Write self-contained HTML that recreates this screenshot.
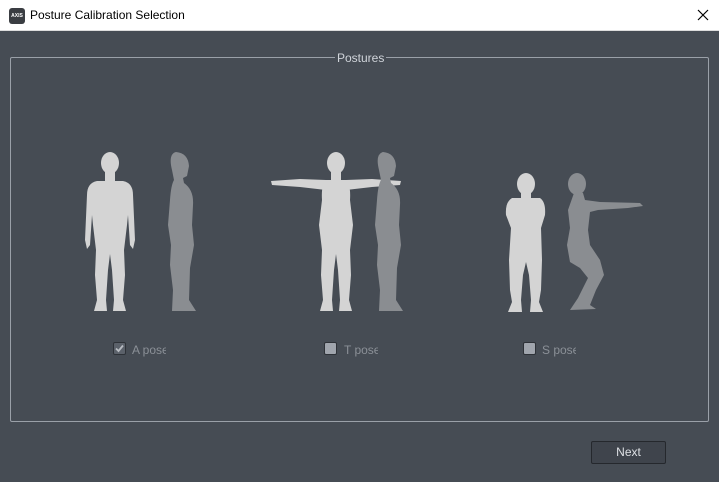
<!DOCTYPE html>
<html><head><meta charset="utf-8"><style>
*{margin:0;padding:0;box-sizing:border-box}
body{width:719px;height:482px;background:#464c54;font-family:"Liberation Sans",sans-serif;position:relative;overflow:hidden}
.tb{position:absolute;left:0;top:0;width:719px;height:31px;background:#fff;border-bottom:1px solid #ddd}
.tb .ic{position:absolute;left:9px;top:8px;width:16px;height:16px;border-radius:3px;background:#3a3d42;color:#fff;font-size:5px;font-weight:bold;line-height:16px;text-align:center}
.tb .t{position:absolute;left:30px;top:8px;font-size:12px;color:#000}
.fr{position:absolute;left:10px;top:57px;width:699px;height:365px;border:1px solid #9aa0a8;border-radius:2px}
.lg{position:absolute;left:335px;top:51px;padding:0 2px;background:#464c54;color:#d0d4da;font-size:12px}
.cb{position:absolute;width:13px;height:13px;border:1px solid #2e3238;border-radius:2px;background:#a0a5ad}
.lb{position:absolute;font-size:12px;color:#8b9097;width:34px;overflow:hidden;white-space:nowrap}
.btn{position:absolute;left:591px;top:441px;width:75px;height:23px;background:#3f444c;border:1px solid #25282d;border-radius:2px;color:#dde0e4;font-size:12px;text-align:center;line-height:21px}
</style></head><body>
<div class="tb"><div class="ic">AXIS</div><div class="t">Posture Calibration Selection</div>
<svg style="position:absolute;left:697px;top:9px" width="12" height="12"><path d="M1,1 L11,11 M11,1 L1,11" stroke="#000" stroke-width="1.2"/></svg></div>
<div class="fr"></div><div class="lg">Postures</div>
<svg style="position:absolute;left:0;top:0" width="719" height="482">
<defs>
<path id="fb" d="M97,181 L123,181 Q133,183 133,195 L135,240 L133,249 L130,245 L128,215 L127,225 L124,250 L125,275 L123,300 L126,311 L113,311 L114,300 L112,270 L110,254 L108,270 L106,300 L107,311 L94,311 L97,300 L95,275 L96,250 L93,225 L92,215 L90,245 L87,249 L85,240 L87,195 Q87,183 97,181 Z"/>
<path id="tb2" d="M100,181 L120,181 Q125,185 124,200 L127,225 L124,250 L125,275 L123,300 L126,311 L113,311 L114,300 L112,270 L110,254 L108,270 L106,300 L107,311 L94,311 L97,300 L95,275 L96,250 L93,225 L96,200 Q95,185 100,181 Z"/>
<path id="sb" d="M176,152 Q188,153 189,166 L187,176 L183,178 L184,183 Q194,190 193,205 L192,225 L194,245 L190,268 L189,300 L196,311 L172,311 L173,290 L170,265 L171,245 L168,225 L170,200 Q171,185 174,180 L172,170 Q168,154 176,152 Z"/>
</defs>
<g fill="#d4d4d4">
<ellipse cx="110" cy="163" rx="9" ry="11"/><rect x="105" y="170" width="10" height="13"/><use href="#fb"/>
<ellipse cx="336" cy="163" rx="9" ry="11"/><rect x="331" y="170" width="10" height="13"/><use href="#tb2" transform="translate(226,0)"/>
<path d="M271,181 L300,179 L326,180 L346,180 L372,179 L401,181 L400,185 L372,187 L346,190 L326,190 L300,187 L272,185 Z"/>
</g>
<g fill="#8a8d91">
<use href="#sb"/><use href="#sb" transform="translate(207,0)"/>
</g>
<g fill="#d4d4d4">
<ellipse cx="526" cy="184" rx="9" ry="11"/><rect x="521" y="191" width="10" height="10"/>
<path d="M512,198 L540,198 Q546,202 545,215 L541,228 L542,260 L541,290 L539,302 L543,312 L530,312 L531,300 L529,275 L526,262 L523,275 L521,300 L522,312 L508,312 L512,302 L510,290 L509,260 L511,228 L506,215 Q505,202 512,198 Z"/>
</g>
<g fill="#8a8d91">
<ellipse cx="577" cy="184" rx="9" ry="11"/>
<path d="M574,193 L583,193 L585,200 L600,202 L640,203 L643,206 L628,208 L598,210 L590,212 L588,230 L590,245 L600,260 L604,275 L596,290 L590,305 L596,309 L570,310 L578,298 L588,278 L580,268 L570,262 L567,245 L570,228 L568,210 Z"/>
</g>
</svg>
<div class="cb" style="left:113px;top:342px;background:#5b616a"><svg width="11" height="11" style="position:absolute;left:0;top:0"><path d="M2,5.5 L4.5,8 L9,2.5" stroke="#b8bcc2" stroke-width="1.8" fill="none"/></svg></div>
<div class="lb" style="left:132px;top:343px">A pose</div>
<div class="cb" style="left:324px;top:342px"></div>
<div class="lb" style="left:344px;top:343px">T pose</div>
<div class="cb" style="left:523px;top:342px"></div>
<div class="lb" style="left:542px;top:343px">S pose</div>
<div class="btn">Next</div>
</body></html>
